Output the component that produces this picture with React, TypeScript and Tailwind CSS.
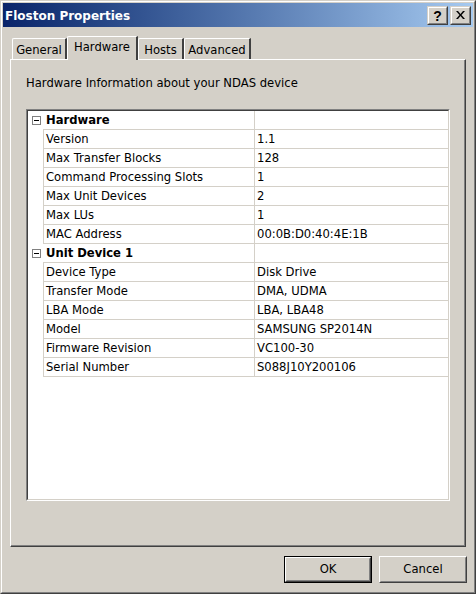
import React from "react";

type Row = { label: string; value?: string; category?: boolean };

const rows: Row[] = [
  { label: "Hardware", category: true },
  { label: "Version", value: "1.1" },
  { label: "Max Transfer Blocks", value: "128" },
  { label: "Command Processing Slots", value: "1" },
  { label: "Max Unit Devices", value: "2" },
  { label: "Max LUs", value: "1" },
  { label: "MAC Address", value: "00:0B:D0:40:4E:1B" },
  { label: "Unit Device 1", category: true },
  { label: "Device Type", value: "Disk Drive" },
  { label: "Transfer Mode", value: "DMA, UDMA" },
  { label: "LBA Mode", value: "LBA, LBA48" },
  { label: "Model", value: "SAMSUNG SP2014N" },
  { label: "Firmware Revision", value: "VC100-30" },
  { label: "Serial Number", value: "S088J10Y200106" },
];

const tabs = [
  { name: "General", w: "w-[55px]" },
  { name: "Hardware", w: "w-[71px]", active: true },
  { name: "Hosts", w: "w-[46px]" },
  { name: "Advanced", w: "w-[67px]" },
];

function CaptionButton({ children }: { children: React.ReactNode }) {
  return (
    <div className="w-[21px] h-[19px] bg-[#d4d0c8] border border-t-[#d4d0c8] border-l-[#d4d0c8] border-r-[#404040] border-b-[#404040]">
      <div className="w-full h-full border border-t-white border-l-white border-r-[#808080] border-b-[#808080] flex items-center justify-center">
        {children}
      </div>
    </div>
  );
}

function PushButton({ label, isDefault }: { label: string; isDefault?: boolean }) {
  return (
    <div className={"w-[88px] h-[27px] " + (isDefault ? "border border-black" : "")}>
      <div className="w-full h-full border border-t-white border-l-white border-r-[#404040] border-b-[#404040]">
        <div className="w-full h-full border border-t-[#d4d0c8] border-l-[#d4d0c8] border-r-[#808080] border-b-[#808080] flex items-center justify-center text-black">
          {label}
        </div>
      </div>
    </div>
  );
}

function MinusBox() {
  return (
    <div className="w-[9px] h-[9px] border border-[#808080] bg-white flex items-center justify-center">
      <div className="w-[5px] h-px bg-black" />
    </div>
  );
}

export default function App() {
  return (
    <div className="w-[476px] h-[594px] bg-[#d4d0c8] border border-t-[#d4d0c8] border-l-[#d4d0c8] border-r-[#404040] border-b-[#404040] font-['DejaVu_Sans',sans-serif] text-[11.6px] leading-[13px] text-black select-none">
      <div className="h-full border border-t-white border-l-white border-r-[#808080] border-b-[#808080] p-px flex flex-col">
        {/* title bar */}
        <div className="h-[24px] flex items-center bg-gradient-to-r from-[#0a246a] to-[#a6caf0] pl-[2px] pr-[2px]">
          <span className="text-white font-bold text-[12px] leading-[14px] flex-1 pt-px">Floston Properties</span>
          <div className="flex gap-[2px]">
            <CaptionButton>
              <span className="font-bold text-[14px] leading-[14px] font-['Liberation_Sans',sans-serif] mt-px">?</span>
            </CaptionButton>
            <CaptionButton>
              <svg width="9" height="8" viewBox="0 0 9 8">
                <path d="M0 0h2l2.5 3 2.5-3h2L5.5 4 9 8H7L4.5 5 2 8H0l3.5-4z" fill="#000" />
              </svg>
            </CaptionButton>
          </div>
        </div>

        <div className="px-[7px] mt-[9px]">
          {/* tabs */}
          <div className="h-[23px] flex items-end pl-[2px]">
            {tabs.map((t) =>
              t.active ? (
                <div
                  key={t.name}
                  className={t.w + " h-[24px] -mb-px relative z-10 bg-[#d4d0c8] border-t border-l border-t-white border-l-white border-r-2 border-r-[#404040] rounded-tl-[2px] flex items-start justify-center pt-[4px]"}
                >
                  {t.name}
                </div>
              ) : (
                <div
                  key={t.name}
                  className={t.w + " h-[21px] border-t border-l border-t-white border-l-white border-r-2 border-r-[#404040] rounded-tl-[2px] flex items-start justify-center pt-[5px]"}
                >
                  {t.name}
                </div>
              )
            )}
          </div>

          {/* panel */}
          <div className="h-[488px] border-t border-l border-t-white border-l-white border-r border-b border-r-[#404040] border-b-[#404040]">
            <div className="h-full border-r border-b border-r-[#808080] border-b-[#808080] pl-[15px] pt-[17px] pr-[14px]">
              <p>Hardware Information about your NDAS device</p>

              <div className="mt-[19px] h-[392px] border border-t-[#808080] border-l-[#808080] border-r-white border-b-white">
                <div className="h-full border border-t-[#404040] border-l-[#404040] border-r-[#d4d0c8] border-b-[#d4d0c8] bg-white">
                  {rows.map((r) =>
                    r.category ? (
                      <div key={r.label} className="flex h-[19px]">
                        <div className="w-[15px] flex items-center justify-center pb-px pl-px">
                          <MinusBox />
                        </div>
                        <div className="flex flex-1 border-b border-[#d4d0c8]">
                          <div className="w-[211px] pl-[3px] pt-px font-bold flex items-center">{r.label}</div>
                          <div className="flex-1 border-l border-[#d4d0c8]" />
                        </div>
                      </div>
                    ) : (
                      <div key={r.label} className="flex h-[19px]">
                        <div className="w-[15px]" />
                        <div className="flex flex-1 border-b border-l border-[#d4d0c8]">
                          <div className="w-[210px] pl-[2px] pt-px flex items-center">{r.label}</div>
                          <div className="flex-1 border-l border-[#d4d0c8] pl-[2px] pt-px flex items-center">{r.value}</div>
                        </div>
                      </div>
                    )
                  )}
                </div>
              </div>
            </div>
          </div>

          {/* buttons */}
          <div className="flex justify-end gap-[7px] mt-[9px] -mr-px">
            <PushButton label="OK" isDefault />
            <PushButton label="Cancel" />
          </div>
        </div>
      </div>
    </div>
  );
}
